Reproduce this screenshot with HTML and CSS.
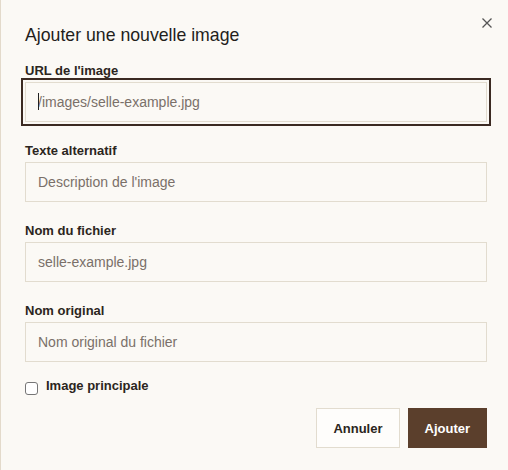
FILE: index.html
```html
<!DOCTYPE html>
<html lang="fr">
<head>
<meta charset="utf-8">
<title>Ajouter une nouvelle image</title>
<link rel="stylesheet" href="styles.css">
</head>
<body>
<div class="dialog">
  <button class="close" aria-label="Fermer">
    <svg width="16" height="16" viewBox="0 0 16 16"><path d="M3.5 3.5 L12.5 12.5 M12.5 3.5 L3.5 12.5" stroke="#555" stroke-width="1.3" fill="none"/></svg>
  </button>
  <h2 class="title">Ajouter une nouvelle image</h2>
  <div class="fields">
    <div class="field">
      <label class="label">URL de l'image</label>
      <div class="input-wrap">
        <input class="input focused" placeholder="/images/selle-example.jpg">
        <span class="caret"></span>
      </div>
    </div>
    <div class="field">
      <label class="label">Texte alternatif</label>
      <input class="input" placeholder="Description de l'image">
    </div>
    <div class="field">
      <label class="label">Nom du fichier</label>
      <input class="input" placeholder="selle-example.jpg">
    </div>
    <div class="field">
      <label class="label">Nom original</label>
      <input class="input" placeholder="Nom original du fichier">
    </div>
  </div>
  <label class="check">
    <span class="box"></span>
    <span>Image principale</span>
  </label>
  <div class="actions">
    <button class="btn btn-outline">Annuler</button>
    <button class="btn btn-primary">Ajouter</button>
  </div>
</div>
</body>
</html>
```
FILE: styles.css
```css
html, body {
  margin: 0;
  padding: 0;
  background: #fbf9f5;
  overflow: hidden;
}
body {
  font-family: "Liberation Sans", Arial, sans-serif;
  color: #2b2520;
}
.dialog {
  position: relative;
  width: 462px;
  padding: 23px 24px 24px 24px;
  border-left: 1px solid #e3dacb;
  background: #fbf9f5;
  display: flex;
  flex-direction: column;
}
.close {
  position: absolute;
  top: 15px;
  right: 16px;
  width: 16px;
  height: 16px;
  padding: 0;
  border: 0;
  background: transparent;
  display: flex;
}
.title {
  margin: 0 0 16px 0;
  font-size: 17.7px;
  font-weight: 400;
  line-height: 24px;
  color: #231e1b;
}
.fields {
  display: flex;
  flex-direction: column;
  gap: 21px;
}
.field {
  display: flex;
  flex-direction: column;
}
.label {
  font-size: 13px;
  font-weight: 700;
  line-height: 16px;
  margin-bottom: 3px;
}
.input-wrap {
  position: relative;
  display: flex;
}
.input {
  box-sizing: border-box;
  width: 462px;
  height: 40px;
  margin: 0;
  padding: 0 12px;
  border: 1px solid #e2dccf;
  background: #fbf9f5;
  font-family: inherit;
  font-size: 14px;
  color: #2b2520;
}
.input::placeholder {
  color: #7a7069;
}
.input.focused {
  outline: 2px solid #3b2a22;
  outline-offset: 2px;
}
.caret {
  position: absolute;
  left: 13px;
  top: 11px;
  width: 1px;
  height: 17px;
  background: #222;
}
.check {
  display: flex;
  align-items: flex-start;
  gap: 8px;
  margin-top: 14px;
  font-size: 13px;
  font-weight: 700;
  line-height: 20px;
}
.box {
  box-sizing: border-box;
  width: 13px;
  height: 13px;
  margin-top: 6px;
  border: 1px solid #767676;
  border-radius: 3px;
  background: #fff;
}
.actions {
  display: flex;
  justify-content: flex-end;
  gap: 8px;
  margin-top: 12px;
}
.btn {
  height: 40px;
  margin: 0;
  padding: 0 16px;
  font-family: inherit;
  font-size: 13px;
  font-weight: 700;
  border: 1px solid #e2dccf;
}
.btn-outline {
  background: #fefdfb;
  color: #2b2520;
}
.btn-primary {
  background: #5b3f2c;
  border-color: #5b3f2c;
  color: #fff;
}
```
